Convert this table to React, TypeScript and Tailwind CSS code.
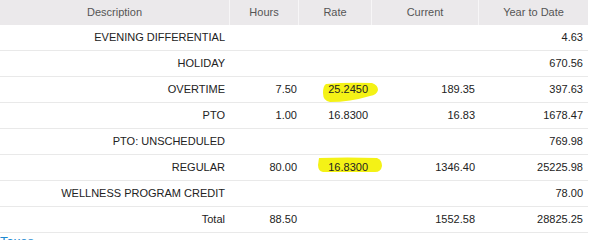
const rows = [
  { desc: 'EVENING DIFFERENTIAL', hours: '', rate: '', current: '', ytd: '4.63' },
  { desc: 'HOLIDAY', hours: '', rate: '', current: '', ytd: '670.56' },
  { desc: 'OVERTIME', hours: '7.50', rate: '25.2450', current: '189.35', ytd: '397.63', mark: 1 },
  { desc: 'PTO', hours: '1.00', rate: '16.8300', current: '16.83', ytd: '1678.47' },
  { desc: 'PTO: UNSCHEDULED', hours: '', rate: '', current: '', ytd: '769.98' },
  { desc: 'REGULAR', hours: '80.00', rate: '16.8300', current: '1346.40', ytd: '25225.98', mark: 2 },
  { desc: 'WELLNESS PROGRAM CREDIT', hours: '', rate: '', current: '', ytd: '78.00' },
  { desc: 'Total', hours: '88.50', rate: '', current: '1552.58', ytd: '28825.25' },
];

// yellow marker strokes drawn over the scan
const Marker = ({ kind }: { kind: number }) =>
  kind === 1 ? (
    <svg className="absolute left-[23px] top-[5px]" width="57" height="21" viewBox="0 0 57 21">
      <path d="M4 2 Q25 0 50 1 Q56 3 56 8 Q55 13 48 14 Q28 20 8 20 Q1 19 1 11 Q1 4 4 2 Z" fill="#f4f216" />
    </svg>
  ) : (
    <svg className="absolute left-[18px] top-[2px]" width="66" height="16" viewBox="0 0 66 16">
      <path d="M2 1 Q30 0 60 1 Q65 3 65 9 Q64 15 58 15 L6 15 Q1 14 1 8 Z" fill="#f4f216" />
    </svg>
  );

export default function App() {
  return (
    <div className="w-[600px] h-[240px] overflow-hidden bg-white font-['Liberation_Sans',Arial,sans-serif] text-[11px] text-[#222]">
      <div className="w-[588px]">
        {/* Header */}
        <div className="grid grid-cols-[230px_69px_73px_107px_109px] h-[25px] bg-[#ebe9eb] text-[#555]">
          {['Description', 'Hours', 'Rate', 'Current', 'Year to Date'].map((h, i) => (
            <div
              key={h}
              className={`flex items-center justify-center ${i < 4 ? 'border-r border-[#f7f6f7]' : ''}`}
            >
              {h}
            </div>
          ))}
        </div>

        {rows.map((r) => (
          <div
            key={r.desc}
            className="grid grid-cols-[230px_69px_73px_107px_109px] h-[26px] border-b border-[#e9e9e9] items-center"
          >
            <div className="text-right pr-[5px]">{r.desc}</div>
            <div className="text-right pr-[2px]">{r.hours}</div>
            <div className="relative h-full flex items-center justify-end pr-[4px]">
              {r.mark && <Marker kind={r.mark} />}
              <span className="relative">{r.rate}</span>
            </div>
            <div className="text-right pr-[4px]">{r.current}</div>
            <div className="text-right pr-[5px]">{r.ytd}</div>
          </div>
        ))}
      </div>
      <div className="pt-[2px] text-[13px] leading-none text-[#1d8ad2]">Taxes</div>
    </div>
  );
}
